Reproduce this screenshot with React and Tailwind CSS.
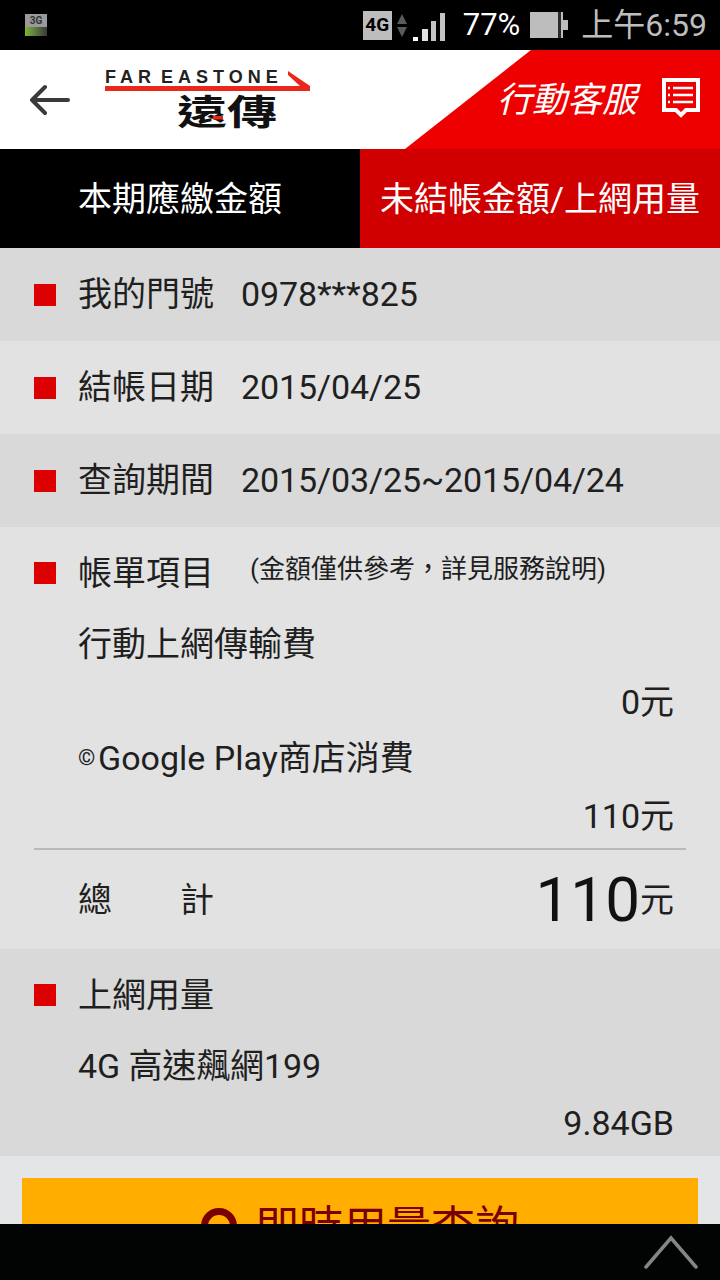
const font = { fontFamily: 'Roboto, "Noto Sans CJK TC", sans-serif' }

function Bullet() {
  return <span className="w-[22px] h-[22px] bg-[#dc0000] shrink-0 mr-[22px]" />
}

function InfoRow({ label, value, shade }) {
  return (
    <div className={`h-[93px] flex items-center pl-[34px] text-[34px] text-[#1f1f1f] ${shade}`}>
      <Bullet />
      <span className="w-[163px] shrink-0">{label}</span>
      <span className="tracking-[-0.1px]">{value}</span>
    </div>
  )
}

function BackArrow() {
  return (
    <svg width="40" height="32" viewBox="0 0 40 32" fill="none" stroke="#3a3a3a" strokeWidth="4" strokeLinecap="round" strokeLinejoin="round">
      <path d="M2 16H38M15 3L2 16L15 29" />
    </svg>
  )
}

function ServiceIcon() {
  return (
    <svg width="38" height="46" viewBox="0 0 38 46" fill="none">
      <path d="M2 3H36V33H24L19 38L14 33H2Z" stroke="#fff" strokeWidth="4" />
      <path d="M11 11H31M11 18H31M11 25H31M6 11H8M6 18H8M6 25H8" stroke="#fff" strokeWidth="2.5" />
    </svg>
  )
}

function SignalBars() {
  return (
    <svg width="32" height="28" viewBox="0 0 32 28" fill="#c4c4c4" className="mt-[4px]">
      <rect x="0" y="24" width="5" height="4" fill="#fff" />
      <rect x="9" y="16" width="6" height="12" fill="#e0e0e0" />
      <rect x="18" y="8" width="5" height="20" />
      <rect x="27" y="0" width="5" height="28" />
    </svg>
  )
}

function StatusBar() {
  return (
    <div className="h-[50px] bg-black flex items-center pl-[25px] pr-[13px]">
      <div className="w-[22px] h-[22px] bg-[#9a9a9a] flex flex-col items-center overflow-hidden">
        <span className="text-[10px] leading-[13px] font-bold text-[#333]">3G</span>
        <span className="w-full h-[9px] bg-gradient-to-r from-[#7fb52f] to-[#3a3a3a]" />
      </div>
      <div className="ml-auto flex items-center">
        <span className="w-[29px] h-[29px] bg-[#bdbdbd] text-black text-[19px] font-bold flex items-center justify-center">4G</span>
        <svg width="10" height="25" viewBox="0 0 10 25" fill="#5a5a5a" className="ml-[5px]">
          <path d="M5 1L10 11H0ZM5 24L0 14H10Z" />
        </svg>
        <span className="ml-[6px]"><SignalBars /></span>
        <span className="ml-[18px] text-[31px] text-white">77%</span>
        <span className="ml-[10px] w-[28px] h-[26px] bg-[#bdbdbd]" />
        <span className="w-[3px] h-[26px] bg-[#2b2b2b]" />
        <span className="w-[2px] h-[26px] bg-[#bdbdbd]" />
        <span className="w-[5px] h-[10px] bg-[#bdbdbd]" />
        <span className="ml-[13px] text-[32px] text-[#bdbdbd]">上午6:59</span>
      </div>
    </div>
  )
}

function Logo() {
  return (
    <div className="relative w-[205px] h-[60px] ml-[35px]">
      <svg width="205" height="21" viewBox="0 0 205 21" fill="#e8281a" className="absolute left-0 top-0">
        <path d="M0 16H195L183 5V1L205 16V21H0Z" />
      </svg>
      <div className="h-[21px] text-[18px] leading-[14px] font-bold text-[#222] tracking-[5px] [word-spacing:-5px] whitespace-nowrap" style={{ fontFamily: '"Liberation Sans", sans-serif' }}>FAR EASTONE</div>
      <div className="relative ml-[72px] mt-[6px] w-[100px] h-[33px] flex justify-center items-center text-[50px] leading-[33px] font-bold text-[#111] scale-y-[0.7] whitespace-nowrap">
        遠傳
        <span className="absolute left-[36px] top-[20px] w-[10px] h-[5px] bg-[#e8281a]" />
      </div>
    </div>
  )
}

function Header() {
  return (
    <div className="relative h-[99px] bg-white flex items-center pl-[30px]">
      <div className="absolute inset-0 bg-[#ee0000] [clip-path:polygon(531px_0,720px_0,720px_100%,405px_100%)]" />
      <div className="relative"><BackArrow /></div>
      <div className="relative"><Logo /></div>
      <div className="relative ml-auto mr-[20px] flex items-center">
        <span className="text-[35px] leading-[50px] text-white italic mr-[25px] mt-[2px]">行動客服</span>
        <ServiceIcon />
      </div>
    </div>
  )
}

function Tabs() {
  return (
    <div className="h-[99px] grid grid-cols-2 text-[34px] text-white text-center">
      <div className="bg-black flex items-center justify-center pt-[2px]">本期應繳金額</div>
      <div className="bg-[#d00000] flex items-center justify-center pt-[2px] whitespace-nowrap">未結帳金額/上網用量</div>
    </div>
  )
}

function BillSection() {
  return (
    <div className="h-[422px] bg-[#e2e2e2] px-[34px] pt-[23px] text-[#1f1f1f] text-[34px]">
      <div className="h-[46px] flex items-center">
        <Bullet />
        <span className="w-[172px] shrink-0">帳單項目</span>
        <span className="text-[26px] -mt-[8px] whitespace-nowrap">(金額僅供參考{'\uFF0C'}詳見服務說明)</span>
      </div>
      <div className="pl-[44px] mt-[25px] leading-[46px]">行動上網傳輸費</div>
      <div className="text-right pr-[12px] mt-[12px] leading-[46px]">0元</div>
      <div className="pl-[44px] mt-[10px] leading-[46px] flex">
        <span className="w-[20px] text-[22px] shrink-0">©</span>Google Play商店消費
      </div>
      <div className="text-right pr-[12px] mt-[12px] leading-[46px]">110元</div>
      <div className="mt-[9px] h-[2px] bg-[#b9b9b9]" />
      <div className="h-[100px] flex items-center pl-[44px] pr-[12px] justify-between">
        <span className="w-[136px] flex justify-between"><span>總</span><span>計</span></span>
        <span className="flex items-center"><span className="text-[62px] leading-[72px] text-[#111]">110</span>元</span>
      </div>
    </div>
  )
}

function UsageSection() {
  return (
    <div className="h-[207px] bg-[#d9d9d9] px-[34px] pt-[23px] text-[#1f1f1f] text-[34px]">
      <div className="h-[46px] flex items-center">
        <Bullet />
        <span>上網用量</span>
      </div>
      <div className="pl-[44px] mt-[25px] leading-[46px] tracking-[-0.1px]">4G 高速飆網199</div>
      <div className="text-right pr-[12px] mt-[11px] leading-[46px]">9.84GB</div>
    </div>
  )
}

function QueryButton() {
  return (
    <div className="bg-[#e3e5e6] px-[22px] pt-[22px] h-[124px]">
      <div className="h-[100px] bg-[#ffae00] flex justify-center pt-[22px] text-[44px] leading-[56px] text-[#7a0000]">
        <span className="w-[36px] h-[36px] border-[7px] border-[#7a0000] rounded-full mt-[8px] mr-[18px]" />
        即時用量查詢
      </div>
    </div>
  )
}

function BottomBar() {
  return (
    <div className="absolute left-0 right-0 bottom-0 h-[56px] bg-[#020303] flex justify-end items-center pr-[22px]">
      <svg width="54" height="34" viewBox="0 0 54 34" fill="none" stroke="#858585" strokeWidth="3.5" strokeLinecap="round">
        <path d="M2 32L27 3L52 32" />
      </svg>
    </div>
  )
}

export default function App() {
  return (
    <div className="relative w-[720px] h-[1280px] overflow-hidden bg-[#e3e5e6]" style={font}>
      <StatusBar />
      <Header />
      <Tabs />
      <InfoRow label="我的門號" value="0978***825" shade="bg-[#d9d9d9]" />
      <InfoRow label="結帳日期" value="2015/04/25" shade="bg-[#e2e2e2]" />
      <InfoRow label="查詢期間" value="2015/03/25~2015/04/24" shade="bg-[#d9d9d9]" />
      <BillSection />
      <UsageSection />
      <QueryButton />
      <BottomBar />
    </div>
  )
}
